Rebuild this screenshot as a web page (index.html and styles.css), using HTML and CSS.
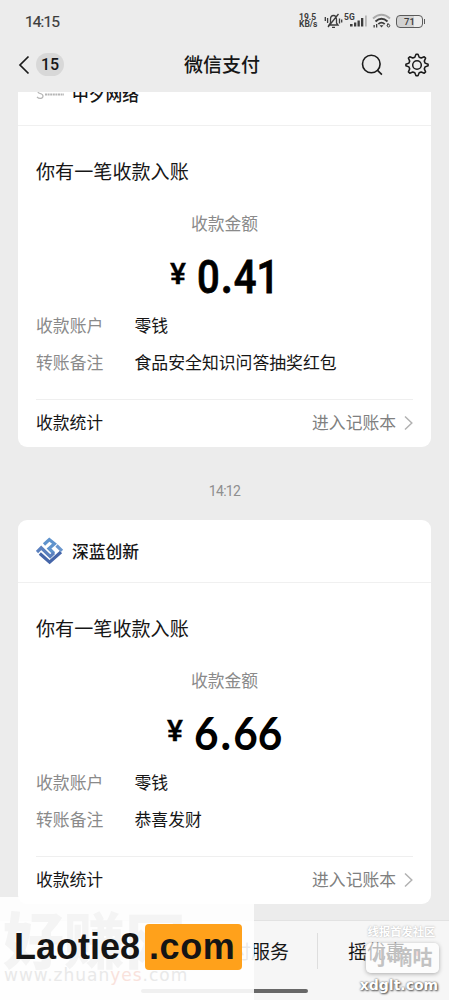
FILE: index.html
```html
<!DOCTYPE html>
<html lang="zh-CN">
<head>
<meta charset="utf-8">
<title>微信支付</title>
<link rel="stylesheet" href="styles.css">
</head>
<body>
<div class="screen">
  <header class="top">
    <div class="status">
      <span class="clock">14:15</span>
      <div class="status-right">
        <span class="rate"><span>19.5</span><span>KB/s</span></span>
        <svg class="i-mute" width="19" height="16" viewBox="0 0 19 16" fill="none" stroke="#3c3c3c" stroke-width="1.3"><path d="M5 12h9l-1.500-2V6.500C12.500 4 11.500 2.500 9.500 2.500S6.500 4 6.500 6.500V10zM8 14.300h3M14.500 1L4 14M3.600 5v5M1.300 4v4M15.500 5.500v5M17.700 6.500v3"/></svg>
        <svg class="i-signal" width="25" height="16" viewBox="0 0 25 16"><text x="0" y="6.500" class="g5">5G</text><g fill="#3c3c3c"><path d="M6 11h2.600v2.500H6zM10 9.500h2.300v4H10zM13.500 7.500h2.300v6h-2.300zM17 5h2.300v8.500H17z"/><path d="M21 2.500h1.800v11H21z" fill="#b5b5b5"/></g></svg>
        <svg class="i-wifi" width="20" height="16" viewBox="0 0 20 16" fill="none" stroke-width="1.900"><path d="M1 5.500Q9.500-2 18 5.500" stroke="#aaa"/><path d="M3.500 8.500Q9.500 3 15.500 8.500M6.300 11.200Q9.500 8 12.700 11.200" stroke="#3c3c3c"/><path d="M9.500 14.500l-2-2.200h4zM1.500 12h1.300v2.500H1.500zM4 11h1.300v3.500H4z" fill="#3c3c3c"/><circle cx="16.500" cy="12.700" r="1.300" stroke="#3c3c3c" stroke-width="1"/><path d="M15.200 12.500l1-2.500" stroke="#3c3c3c" stroke-width="1"/></svg>
        <span class="battery">71</span>
      </div>
    </div>
    <nav class="nav">
      <svg width="12" height="20" viewBox="0 0 12 20" fill="none" stroke="#1b1b1b" stroke-width="1.700"><path d="M10.500 1.500L2 10l8.500 8.500"/></svg>
      <span class="count">15</span>
      <h1>微信支付</h1>
      <svg class="search" width="22" height="22" viewBox="0 0 22 22" fill="none" stroke="#1b1b1b" stroke-width="1.600"><circle cx="10.300" cy="10" r="8.800"/><path d="M16.300 16.200l4.600 4.400"/></svg>
      <svg class="gear" width="24" height="24" viewBox="0 0 24 24" fill="none" stroke="#1b1b1b" stroke-width="1.500" stroke-linejoin="round"><path d="M11 1.200h2l1.200 3 2 .8 3-1.300 1.400 1.400-1.300 3 .8 2 3 1.200v1.400l-3 1.200-.8 2 1.300 3-1.400 1.400-3-1.300-2 .8-1.200 3h-2l-1.200-3-2-.8-3 1.300-1.400-1.400 1.300-3-.8-2-3-1.200v-1.400l3-1.200.8-2-1.300-3 1.400-1.400 3 1.300 2-.8z"/><circle cx="12" cy="12" r="4.300"/></svg>
    </nav>
  </header>

  <main class="feed">
    <section class="card first">
      <div class="card-head">
        <svg width="28" height="28" viewBox="0 0 28 28" fill="none" stroke="#b5b5b5" stroke-width="1.200"><path d="M7 11c-2-2-5-1-5 1s5 1 5 4-4 3-6 1"/><path d="M9 14.500h19" stroke-dasharray="2 .6" stroke-width="1.800"/></svg>
        <span>中夕网络</span>
      </div>
      <div class="card-body">
        <h2>你有一笔收款入账</h2>
        <p class="caption">收款金额</p>
        <p class="amount narrow"><span class="yen">¥</span><span class="num">0<b>.</b>41</span></p>
        <dl><dt>收款账户</dt><dd>零钱</dd><dt>转账备注</dt><dd>食品安全知识问答抽奖红包</dd></dl>
        <div class="card-foot"><span>收款统计</span><span class="more">进入记账本</span><svg width="9" height="16" viewBox="0 0 9 16" fill="none" stroke="#b2b2b2" stroke-width="1.500"><path d="M1 1.500L7.800 8 1 14.500"/></svg></div>
      </div>
    </section>

    <time>14:12</time>

    <section class="card">
      <div class="card-head">
        <svg width="28" height="28" viewBox="0 0 28 28" fill="none" stroke-width="3.200"><path d="M8 7.500L13.300 2.500l5.200 4.200-5.500 4.800 5 5" stroke="#5f93cd"/><path d="M1 15l4.200-4.200 9 8.700 3.800-3.600" stroke="#5b80be"/><path d="M3.800 16.500l9.800 8.700L25 15" stroke="#4565a8"/><path d="M20.500 8.500l5.500 5.300" stroke="#6a96cd"/></svg>
        <span>深蓝创新</span>
      </div>
      <div class="card-body">
        <h2>你有一笔收款入账</h2>
        <p class="caption">收款金额</p>
        <p class="amount wide"><span class="yen">¥</span><span class="num">6<b>.</b>66</span></p>
        <dl><dt>收款账户</dt><dd>零钱</dd><dt>转账备注</dt><dd>恭喜发财</dd></dl>
        <div class="card-foot"><span>收款统计</span><span class="more">进入记账本</span><svg width="9" height="16" viewBox="0 0 9 16" fill="none" stroke="#b2b2b2" stroke-width="1.500"><path d="M1 1.500L7.800 8 1 14.500"/></svg></div>
      </div>
    </section>
  </main>

  <footer class="tabs">
    <span class="tab">支付服务</span>
    <span class="tab right">摇优惠<i></i></span>
  </footer>
  <div class="home"></div>

  <div class="stamp-left">
    <div class="ghost">好赚网</div>
    <div class="ghost-url">www.zhuan<b>yes</b>.com</div>
    <div class="brand"><span>Laotie8</span><span class="dot">.com</span></div>
  </div>

  <div class="stamp-right">
    <span class="slogan">线报首发社区</span>
    <span class="pill">小嘀咕</span>
    <span class="site">xdglt.com</span>
  </div>
</div>
</body>
</html>
```
FILE: styles.css
```css
* { box-sizing: border-box; }
body { margin: 0; background: #ececec; font-family: Roboto, "Noto Sans CJK SC", sans-serif; color: #161616; }
h1, h2, p, dl, dd { margin: 0; font-weight: 400; }
svg { display: block; flex: none; }
.screen { position: relative; width: 449px; height: 1000px; overflow: hidden; display: flex; flex-direction: column; background: #ececec; }

.top { height: 92px; flex: none; }
.status { height: 42px; padding: 0 25px; display: flex; align-items: center; justify-content: space-between; color: #3c3c3c; }
.clock { font-size: 15.500px; letter-spacing: -.9px; padding-top: 1px; -webkit-text-stroke: .2px #3c3c3c; }
.status-right { display: flex; align-items: center; }
.rate { display: flex; flex-direction: column; font-size: 8.500px; line-height: 7px; font-weight: 700; width: 20px; margin-right: 5px; }
.i-mute { margin-right: 1px; }
.i-signal { margin-right: 3px; }
.g5 { font-size: 8.500px; font-weight: 700; fill: #3c3c3c; }
.i-wifi { margin-right: 4px; }
.battery { position: relative; width: 27px; height: 13px; border: 1.500px solid #5b5b5b; border-radius: 4px; font-size: 9.500px; line-height: 11px; font-weight: 500; text-align: center; background: linear-gradient(90deg, #d2d2d2 70%, #ececec 70%); margin-right: 1px; }
.battery::after { content: ""; position: absolute; right: -3px; top: 3px; width: 1.500px; height: 5px; background: #5b5b5b; }
.nav { position: relative; height: 45px; padding: 0 20px 0 18px; display: flex; align-items: center; }
.count { width: 28px; height: 23px; margin-left: 6px; border-radius: 12px; background: #d8d8d8; font-size: 16px; font-weight: 500; line-height: 23px; text-align: center; }
.nav h1 { flex: 1; padding: 2px 0 0 120px; font-size: 19px; font-weight: 500; line-height: 28px; }
.search { margin-right: 22px; }

.feed { height: 828px; flex: none; padding: 0 18px; overflow: hidden; }
.card { height: 384px; background: #fff; border-radius: 9px; }
.card.first { margin-top: -29px; }
.card-head { height: 63px; padding: 0 18px; display: flex; align-items: center; gap: 8px; border-bottom: 1px solid #f0f0f0; font-size: 16.800px; line-height: 25px; font-weight: 500; }
.card-head span { padding-top: 3px; }
.card-body { padding: 33px 18px 0; }
h2 { font-size: 19.100px; line-height: 28px; }
.caption { margin-top: 25px; text-align: center; color: #8a8a8a; font-size: 16.800px; line-height: 25px; }
.amount { height: 60px; margin-top: 10px; display: flex; color: #000; font-weight: 500; line-height: 60px; white-space: nowrap; }
.yen { display: block; width: 27px; font-size: 30px; line-height: 54px; -webkit-text-stroke: .4px #000; }
.num { display: block; transform-origin: 0 50%; }
.num b { display: inline-block; width: 16px; text-align: center; }
.narrow { padding-left: 134px; }
.narrow .num { font-size: 46px; transform: scaleX(.87); -webkit-text-stroke: .8px #000; }
.wide { padding-left: 131px; }
.wide .num { font: 700 46px/58px Lato, sans-serif; transform: scaleX(.92); }
dl { display: grid; grid-template-columns: 98.500px 1fr; row-gap: 12px; font-size: 16.850px; line-height: 25px; margin-top: 7px; }
dt { color: #8a8a8a; }
.card-foot { margin-top: 23px; height: 47px; border-top: 1px solid #efefef; display: flex; align-items: center; font-size: 16.800px; line-height: 25px; }
.card-foot span { padding-top: 1px; }
.more { margin-left: auto; margin-right: 8px; color: #808080; }
time { display: block; height: 73px; line-height: 89px; text-align: center; color: #8f8f8f; font-size: 14px; letter-spacing: -.7px; }

.tabs { height: 80px; flex: none; display: grid; grid-template-columns: 318px 1fr; background: #f6f6f6; border-top: 1px solid #e2e2e2; font-size: 19px; }
.tab { line-height: 63px; padding-left: 213px; }
.tab.right { padding-left: 30px; position: relative; }
.tab.right::before { content: ""; position: absolute; left: -1px; top: 12px; height: 36px; width: 1px; background: #dedede; }
.tab i { position: absolute; left: 97px; top: 30px; width: 5px; height: 5px; border-radius: 50%; background: #ef8585; }
.home { position: absolute; left: 141px; top: 989px; width: 167px; height: 4px; border-radius: 2px; background: #686868; }

.stamp-left { position: absolute; left: 0; top: 897px; width: 254px; height: 103px; background: rgba(255, 255, 255, .9); }
.ghost { position: absolute; left: 3px; top: 16px; font-size: 61px; line-height: 60px; font-weight: 900; color: #f4f4f4; }
.ghost-url { position: absolute; left: 4px; top: 68px; font: 17px/20px "DejaVu Sans", sans-serif; letter-spacing: 1px; color: #e9e9e9; white-space: nowrap; }
.ghost-url b { font-weight: 400; color: #f9e2dc; }
.brand { position: absolute; left: 14px; top: 27px; display: flex; font: 700 36px/46px "Liberation Sans", Arial, sans-serif; color: #151515; }
.brand span:first-child { width: 131px; }
.brand .dot { width: 97px; padding-left: 4px; letter-spacing: .6px; border-radius: 4px; background: #ffa11b; }

.stamp-right { position: absolute; left: 354px; top: 925px; width: 90px; display: flex; flex-direction: column; align-items: center; color: #fff; white-space: nowrap; }
.slogan { margin-left: 5px; font-size: 11.300px; line-height: 16px; font-weight: 700; text-shadow: 0 0 2px #aaa; }
.pill { width: 73px; height: 30px; margin: 2px 0 0 7px; border-radius: 5px; background: rgba(255, 255, 255, .7); box-shadow: 0 1px 4px #aaa; color: #c2c2c2; font-size: 20px; line-height: 30px; font-weight: 700; text-align: center; }
.site { margin-top: 2px; font: 700 14px/20px "DejaVu Sans", sans-serif; text-shadow: 0 0 2px #555, 1px 1px 2px #555; }
```
